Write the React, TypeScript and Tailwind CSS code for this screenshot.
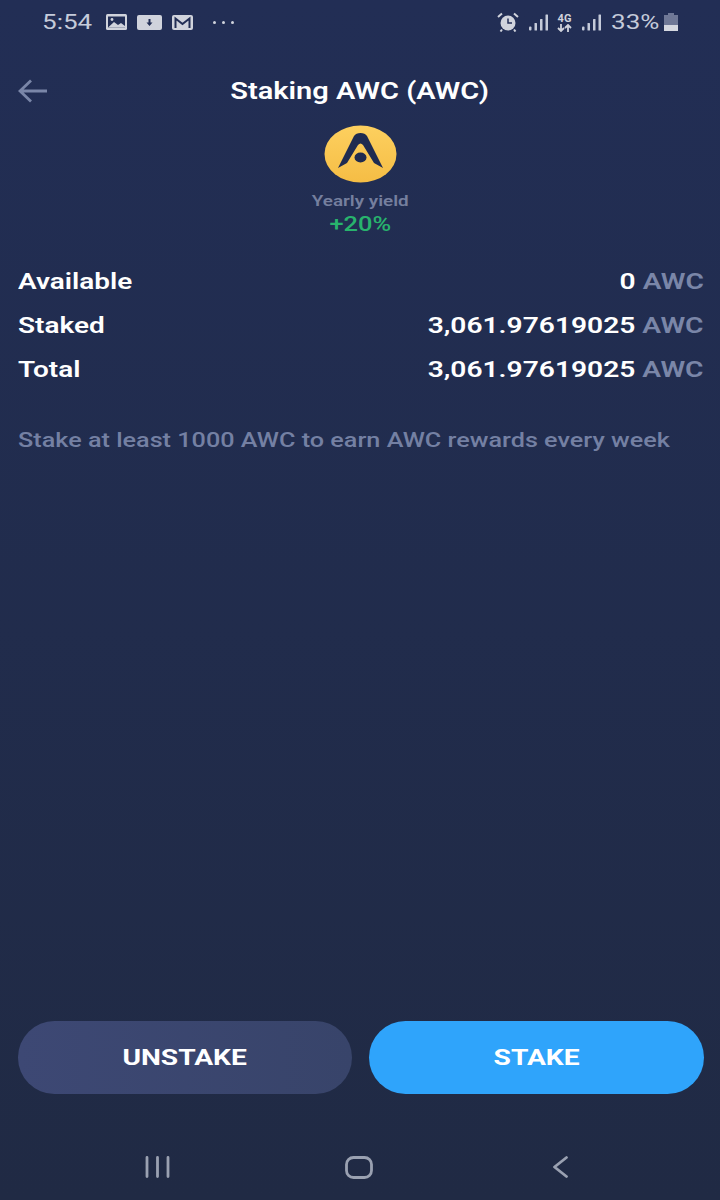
function Signal({ className }: { className?: string }) {
  return (
    <svg className={className} width="19" height="17" viewBox="0 0 19 17" fill="#c5cbda">
      <rect x="0" y="12.500" width="2.500" height="4" rx="1" />
      <rect x="5.500" y="9" width="2.500" height="7.500" rx="0.500" />
      <rect x="11" y="5" width="2.500" height="11.500" rx="0.500" />
      <rect x="16.500" y="0.500" width="2.500" height="16" rx="0.500" />
    </svg>
  );
}

export default function App() {
  const rows = [
    ["Available", "0"],
    ["Staked", "3,061.97619025"],
    ["Total", "3,061.97619025"],
  ];
  return (
    <div className="w-[720px] h-[1200px] flex flex-col bg-gradient-to-b from-[#222e55] to-[#202a44] font-['Roboto',sans-serif] overflow-hidden">
      <div className="h-[44px] flex items-center pl-[42px] pr-[42px] shrink-0 text-[#c5cbda]">
        <span className="inline-block text-[20.500px] w-[54px] leading-none origin-left scale-x-[1.27]">5:54</span>
        <svg className="ml-[10px]" width="21" height="16" viewBox="0 0 21 16"><rect width="21" height="16" rx="1.500" fill="#d0d3dc" /><rect x="2" y="2.500" width="17" height="11" fill="#222e55" /><path d="M2 13.500 8 8l4 3 3-2 4 3v1.500z" fill="#d0d3dc" /><circle cx="6" cy="5.500" r="1.400" fill="#d0d3dc" /></svg>
        <svg className="ml-[10px]" width="25" height="15" viewBox="0 0 25 15"><rect width="25" height="15" rx="2" fill="#d0d3dc" /><path d="M11.500 4h2v3.500h2L12.500 11 9.500 7.500h2z" fill="#222e55" /></svg>
        <svg className="ml-[10px]" width="21" height="15" viewBox="0 0 21 15"><rect width="21" height="15" rx="2" fill="#d0d3dc" /><path d="M3.500 13V3.500l7 5.500 7-5.500V13" fill="none" stroke="#222e55" strokeWidth="2" /></svg>
        <div className="ml-[20px] flex gap-[6px]"><span className="w-[3px] h-[3px] rounded-full bg-[#d0d3dc]" /><span className="w-[3px] h-[3px] rounded-full bg-[#d0d3dc]" /><span className="w-[3px] h-[3px] rounded-full bg-[#d0d3dc]" /></div>
        <div className="ml-auto flex items-center">
          <svg width="22" height="20" viewBox="0 0 22 20"><circle cx="11" cy="11" r="7.500" fill="#d0d3dc" /><path d="M11 6.500V11h4" fill="none" stroke="#222e55" strokeWidth="1.500" /><path d="M1 5 5 1.500M21 5l-4-3.500M5 17.500 3.500 19.500M17 17.500l1.500 2" stroke="#d0d3dc" strokeWidth="2" /></svg>
          <Signal className="ml-[10px]" />
          <div className="ml-[9px] w-[15px] flex flex-col items-center">
            <span className="text-[11px] font-bold leading-none text-[#d0d3dc]">4G</span>
            <svg width="15" height="8" viewBox="0 0 15 8" fill="none" stroke="#d0d3dc" strokeWidth="1.800"><path d="M4 0v7M1 4l3 3 3-3M11 8V1M8 4l3-3 3 3" /></svg>
          </div>
          <Signal className="ml-[10px]" />
          <span className="inline-block ml-[10px] w-[47px] text-[20.500px] leading-none text-[#c5cbda] origin-left scale-x-[1.27]">33%</span>
          <svg className="ml-[6px]" width="14" height="18" viewBox="0 0 14 18"><path d="M4 0h6v2h4v16H0V2h4z" fill="#6f7896" /><rect y="12" width="14" height="6" fill="#d5d8e0" /></svg>
        </div>
      </div>

      <div className="mt-[23px] h-[48px] flex items-center relative shrink-0 pl-[18px]">
        <svg width="29" height="24" viewBox="0 0 29 24" fill="none" stroke="#7a86a8" strokeWidth="2.800"><path d="M29 12H2M13 1.500 2 12l11 10.500" /></svg>
        <div className="absolute inset-x-0 text-center leading-none">
          <span className="inline-block text-white text-[23px] font-semibold scale-x-[1.26]">Staking AWC (AWC)</span>
        </div>
      </div>

      <div className="flex flex-col items-center mt-[10px]">
        <svg width="73" height="58" viewBox="0 0 73 58">
          <defs><linearGradient id="g" x1="0" y1="0" x2="0" y2="1"><stop offset="0" stopColor="#fdd05f" /><stop offset="1" stopColor="#f5bd45" /></linearGradient></defs>
          <ellipse cx="36.500" cy="29" rx="36" ry="28.500" fill="url(#g)" />
          <path d="M14 43 30 11Q32 8 36.500 8 41 8 43 11L59 43 50 38 39 20Q36.500 17 34 20L23 38Z" fill="#1f2b50" />
          <ellipse cx="36.500" cy="32.500" rx="6" ry="5" fill="#1f2b50" />
        </svg>
        <span className="inline-block text-[14.500px] font-semibold leading-none mt-[12px] text-[#757f9e] scale-x-[1.3]">Yearly yield</span>
        <span className="inline-block text-[20px] font-medium leading-none mt-[4px] text-[#28b36d] scale-x-[1.27]">+20%</span>
      </div>

      <div className="mt-[33px] pl-[18px] pr-[16px] flex flex-col gap-[14px]">
        {rows.map(([k, v]) => (
          <div key={k} className="flex justify-between items-center h-[30px] text-[22px] font-semibold leading-none">
            <span className="inline-block text-white origin-left scale-x-[1.27]">{k}</span>
            <span className="inline-block text-white origin-right scale-x-[1.28]">{v} <span className="text-[#7a86a8]">AWC</span></span>
          </div>
        ))}
      </div>

      <div className="mt-[45px] px-[18px]">
        <p className="text-[20px] font-medium leading-none text-[#7480a3] whitespace-nowrap origin-left scale-x-[1.26]">Stake at least 1000 AWC to earn AWC rewards every week</p>
      </div>

      <div className="mt-auto pl-[18px] flex gap-[17px]">
        <button className="w-[334px] h-[73px] rounded-full bg-gradient-to-r from-[#3d4874] to-[#38446a] text-white text-[22px] font-bold"><span className="inline-block scale-x-[1.28]">UNSTAKE</span></button>
        <button className="w-[335px] h-[73px] rounded-full bg-[#2fa4fb] text-white text-[22px] font-bold"><span className="inline-block scale-x-[1.28]">STAKE</span></button>
      </div>

      <div className="h-[106px] shrink-0 flex items-center text-[#9aa1b1] pt-[40px] pl-[145px]">
        <svg width="25" height="22" viewBox="0 0 25 22" fill="none" stroke="currentColor" strokeWidth="2.800" strokeLinecap="round"><path d="M2 1.500v19M12.500 1.500v19M23 1.500v19" /></svg>
        <svg className="ml-[175px]" width="28" height="23" viewBox="0 0 28 23" fill="none" stroke="currentColor" strokeWidth="2.800"><rect x="1.500" y="1.500" width="25" height="20" rx="7" /></svg>
        <svg className="ml-[179px]" width="17" height="22" viewBox="0 0 17 22" fill="none" stroke="currentColor" strokeWidth="2.800" strokeLinecap="round" strokeLinejoin="round"><path d="M14.500 1.500 2.500 11l12 9.500" /></svg>
      </div>
    </div>
  );
}
